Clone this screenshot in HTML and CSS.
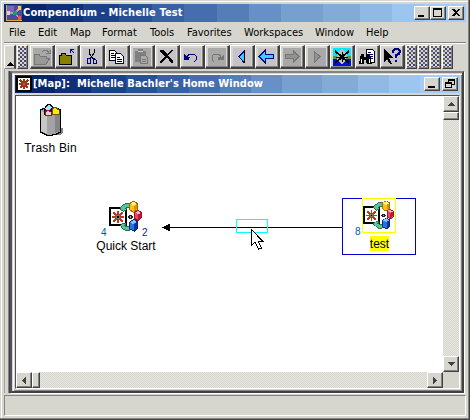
FILE: index.html
```html
<!DOCTYPE html>
<html lang="en"><head><meta charset="utf-8"><title>Compendium - Michelle Test</title><link rel="stylesheet" href="styles.css"></head>
<body>
<svg class="defs" width="0" height="0" shape-rendering="crispEdges">
<symbol id="map" viewBox="0 0 34 34">
<path d="M1 8h16v17H1z" fill="#fff" stroke="#000" stroke-width="2"/>
<path d="M8 11h2v12H8zM3 16h12v2H3zM4 12h2v1h1v1h1v1h2v-1h1v-1h1v-1h2v2h-1v1h-1v1h-1v2h1v1h1v1h1v2h-2v-1h-1v-1h-1v-1H8v1H7v1H6v1H4v-2h1v-1h1v-1h1v-2H6v-1H5v-1H4z" fill="#b53c18"/><path d="M7 15h4v4H7z" fill="#777"/><path d="M8 16h2v2H8z" fill="#000"/>
<path d="M11.500 7.500l2-2 3-2h4v4h-3l-1 1h1v1l-3 2-3-2zM11.500 25.500l2-2h3v1l-1 1 2 1h3v4h-4l-3-2z" fill="#5ac59c" stroke="#18754a"/>
<path d="M20 15h3v1h1v2h-1v1h-3v-1h-1v-2h1z" fill="#222"/><path d="M21 16h1v2h-1z" fill="#aaa"/>
<path d="M20.500 3.500l4-2 4 2v6l-4 3-4-3z" fill="#f7c318" stroke="#a56500"/><path d="M21 3l4-1 3 2-4 2z" fill="#fff384"/><path d="M25 6l3-2v5l-3 2z" fill="#d69210"/>
<path d="M25.500 12.500l3-2 4 2v5l-3 3-4-2z" fill="#ef4563" stroke="#a51028"/><path d="M26 12l3-1 3 2-3 1z" fill="#ffb5bd"/><path d="M29 14l3-1v4l-3 3z" fill="#bd1839"/>
<path d="M20.500 22.500l4-3 4 2v7l-3 3-5-3z" fill="#2971de" stroke="#08246b"/><path d="M21 22l4-2 3 2-4 2z" fill="#84c3ff"/><path d="M25 24l3-2v6l-3 3z" fill="#0834a5"/>
</symbol>
</svg>
<div class="app">
<div class="title"><svg class="logo" width="16" height="16"><path d="M0 0h16v16H0z" fill="#5148a4"/><path d="M1 1h7v6H1z" fill="#7967bc"/><path d="M2 8h7L14 3M9 8l4 5" stroke="#c78fc0" stroke-width="1.500" fill="none"/><circle cx="9" cy="8" r="2.200" fill="#18a55a"/><path d="M1 6h3v4H1z" fill="#d8c8f0"/><circle cx="13.500" cy="3" r="2" fill="#f7cf39"/><circle cx="13.500" cy="13" r="2" fill="#e7593c"/><path d="M0 15.500h16M.500 0v16" stroke="#d9a536"/></svg><b class="t1">Compendium - Michelle Test</b>
<span class="ctl first"><svg width="14" height="12"><path d="M3 8h6v2H3z"/></svg></span><span class="ctl"><svg width="14" height="12"><path d="M2 1h9v9H2zM3 3v6h7V3z" fill-rule="evenodd"/></svg></span><span class="ctl close"><svg width="14" height="12"><path d="M3 2h2l2 2 2-2h2L8 5.500l3 3.500H9L7 7 5 9H3l3-3.500z"/></svg></span></div>
<div class="menu"><span class="m1">File</span><span class="m2">Edit</span><span class="m3">Map</span><span class="m4">Format</span><span class="m5">Tools</span><span class="m6">Favorites</span><span class="m7">Workspaces</span><span class="m8">Window</span><span class="m9">Help</span></div>
<div class="tools">
<div class="fold"><svg width="9" height="5"><path d="M0 4h7V3H6V2H5V1H4V0H3v1H2v1H1v1H0z"/></svg></div><div class="grip lead"></div>
<div class="btn off"><svg width="18" height="18"><path d="M1 6h5l1 2h6v2h4l-4 6H1z" fill="#999" stroke="#777"/><path d="M9 4l2-2h3l2 3M13 5h4V2" stroke="#777" fill="none"/></svg></div>
<div class="btn"><svg width="18" height="18"><path d="M1 7h2V5h4l1 2h5v9H1z" fill="#848200" stroke="#000"/><path d="M12 1h4M12 1v4M12 1l4 4" stroke="#000094" fill="none"/></svg></div>
<div class="btn"><svg width="18" height="18"><path d="M6 1v4l4 6M11 1v4l-4 6" stroke="#000" fill="none"/><path d="M7 10l-3 1v4h3zM10 10l3 2v3h-3z" fill="none" stroke="#000084"/></svg></div>
<div class="btn"><svg width="18" height="18"><path d="M1.500 2.500h5l3 3v7h-8z" fill="#fff" stroke="#000"/><path d="M7.500 5.500h5l3 3v7h-8z" fill="#fff" stroke="#000084"/><path d="M3 5.500h3M3 7.500h4M3 9.500h4M9 9.500h3M9 11.500h5M9 13.500h5" stroke="#000"/></svg></div>
<div class="btn off"><svg width="18" height="18"><path d="M2 3h3V1h5v2h3v11H2z" fill="#808080"/><path d="M5 3h5" stroke="#ccc"/><path d="M7.500 7.500h5l2 2v6h-7z" fill="#aaa" stroke="#777"/><path d="M9 11h4M9 13h4" stroke="#777"/></svg></div>
<div class="btn"><svg width="18" height="18"><path d="M2 2h3l4 4 4-4h2l-5 5 5 6v2h-2L9 9l-5 6H2v-2l5-5-5-4z"/></svg></div>
<div class="btn"><svg width="18" height="18"><path d="M1 6l3 3h3l-1 3H1z" fill="#000084"/><path d="M4 9l2-3h5l2 2v4l-2 2" fill="none" stroke="#000084"/></svg></div>
<div class="btn off"><svg width="18" height="18"><path d="M16 6l-3 3h-3v3h6z" fill="#777"/><path d="M13 9l-2-3H6L4 8v4l2 2" fill="none" stroke="#777"/></svg></div>
<div class="btn"><svg width="18" height="18"><path d="M11.500 3v11h-1L6 8.500z" fill="#38cfff" stroke="#000084"/><path d="M11.500 3v12" stroke="#000"/></svg></div>
<div class="btn"><svg width="18" height="18"><path d="M1 8.500l6-6v4h8v4H7v4z" fill="#38cfff" stroke="#000084"/></svg></div>
<div class="btn off"><svg width="18" height="18"><path d="M16 8.500l-6-6v4H2v4h8v4z" fill="#929292" stroke="#777"/></svg></div>
<div class="btn off"><svg width="18" height="18"><path d="M6 3v11h1l5-5.500z" fill="#929292" stroke="#777"/></svg></div>
<div class="btn"><svg width="18" height="18"><path d="M0 0h18v18H0z" fill="#00e8ff"/><path d="M0 11h18v7H0z" fill="#0010df"/><path d="M0 8h18v3H0z" fill="#4b9b48"/><path d="M5 4l4-3 5 4-1 8-4 3-5-4z" fill="#bdbdbd"/><path d="M2 3l14 12M16 3L2 15" stroke="#000" stroke-width="2"/><path d="M3 9h12M9 4v10" stroke="#000"/></svg></div>
<div class="btn"><svg width="18" height="18"><path d="M8.500 1.500h6l2 2v11h-8z" fill="#fff" stroke="#000"/><path d="M10 4.500h3M10 6.500h5M10 8.500h5M10 10.500h5" stroke="#000084"/><path d="M3 6h3v3h3V6h3l2 10H9v-4H6v4H1z"/><path d="M3 11h1v4H3zM11 11h1v4h-1z" fill="#fff"/></svg></div>
<div class="btn"><svg width="18" height="18"><path d="M1 1v13l3-3 3 5h2l-3-6h4z"/><path d="M10 5V3l2-2h3l2 2-1 3-3 1v3" fill="none" stroke="#000084" stroke-width="2"/><path d="M12 12h2v2h-2z" fill="#000084"/></svg></div>
<div class="grip after"></div><div class="grip"></div><div class="grip"></div><div class="grip"></div>
</div>
<div class="desk"><div class="inner">
<div class="title child"><svg class="logo" width="16" height="16"><path d="M1 1h14v14H1z" fill="#fff" stroke="#000" stroke-width="2"/><path d="M8 3v10M3 8h10M4 4l8 8M12 4l-8 8" stroke="#a53010" stroke-width="1.500"/><path d="M7 7h2v2H7z" fill="#777"/></svg><b class="t2">[Map]:&nbsp; Michelle Bachler's Home Window</b>
<span class="ctl first"><svg width="14" height="12"><path d="M3 8h7v2H3z"/></svg></span><span class="ctl close"><svg width="14" height="12"><path d="M5 1h7v6H9v3H2V4h3zM6 3v1h3v2h2V3zM3 6v3h5V6z" fill-rule="evenodd"/></svg></span></div>
<div class="view">
<div class="canvas">
<svg class="wire" width="427" height="276" shape-rendering="crispEdges"><path d="M151 131.500h175" stroke="#000"/><path d="M146 131.500l8-4v8z"/><rect x="220.500" y="123.500" width="31" height="13" fill="none" stroke="#0ff"/><rect x="326.500" y="102.500" width="73" height="56" fill="none" stroke="#0000c6"/></svg>
<div class="node trash"><svg width="26" height="34" shape-rendering="crispEdges"><path d="M20 26h5v4l-3 3h-9z" fill="#848284"/><path d="M2.500 8l4-2h12l4 2v22l-4 2-4 1h-6l-6-3z" fill="#a5a2a5" stroke="#000"/><path d="M3 9l6 3v20l-6-3z" fill="#c6c6c6"/><path d="M17 12l5-2v19l-5 2z" fill="#858585"/><path d="M6 7l4-5h2l4 4-2 6H6z" fill="#00087b" stroke="#000"/><path d="M7 6l4-4 3 4-5 4z" fill="#b5dfff"/><path d="M14 7l3-2 4 3v4h-7z" fill="#ffeb00" stroke="#635900"/><path d="M7 10l3-2 3 2v3H7z" fill="#d8d8d8" stroke="#c00"/></svg><span>Trash Bin</span></div>
<div class="node quick"><svg width="34" height="34"><use href="#map"/></svg><span>Quick Start</span><i class="n4">4</i><i class="n2">2</i></div>
<div class="node test"><svg width="34" height="34"><use href="#map"/></svg><span>test</span><i class="n8">8</i></div>
<svg class="cursor" width="13" height="22" shape-rendering="crispEdges"><path d="M.500 .500v16l3.500-3.500 3.500 7 3-1-3.500-7h4.500z" fill="#fff" stroke="#000"/></svg>
</div>
<div class="vs"><span class="sb"><svg width="7" height="4"><path d="M3 0h1v1h1v1h1v1h1v1H0V3h1V2h1V1h1z"/></svg></span><span class="thumb"></span><span class="sb end"><svg width="7" height="4"><path d="M0 0h7v1H6v1H5v1H4v1H3V3H2V2H1V1H0z"/></svg></span></div>
<div class="hs"><span class="sb"><svg width="4" height="7"><path d="M4 0v7H3V6H2V5H1V4H0V3h1V2h1V1h1V0z"/></svg></span><span class="thumb"></span><span class="sb end"><svg width="4" height="7"><path d="M0 0h1v1h1v1h1v1h1v1H3v1H2v1H1v1H0z"/></svg></span></div><div class="corner"></div>
</div></div></div>
<div class="status"></div>
</div></body></html>
```
FILE: styles.css
```css
*{box-sizing:border-box}
body{margin:0;background:#d6d6ce;font-family:"DejaVu Sans Condensed","DejaVu Sans",sans-serif;font-stretch:condensed;font-size:11px;color:#000}
svg{display:block;shape-rendering:crispEdges;flex:none}
.defs{position:absolute}
.app{width:470px;height:420px;padding:4px 3px 3px 4px;display:flex;flex-direction:column;box-shadow:inset -1px -1px #424142,inset -2px -2px #848284,inset 1px 1px #d6d6ce,inset 2px 2px #fff;overflow:hidden}
.title{width:462px;height:18px;flex:none;display:flex;align-items:center;padding:0 2px;color:#fff;background:linear-gradient(90deg,#08246b 0 9%,#102f78 9% 17%,#1c408c 17% 25%,#295096 25% 32%,#395fa5 32% 39%,#466dae 39% 46%,#557eb9 46% 53%,#6690c7 53% 60%,#779fcf 60% 69%,#84abd7 69% 77%,#92b9e5 77% 84%,#9cc5ef 84% 91%,#a5cbf7 91%)}
.title b{font-size:11px;line-height:18px;white-space:pre;margin-left:1px;letter-spacing:.12px;flex:none}
.title .t2{letter-spacing:.06px}
.ctl{width:16px;height:14px;background:#d6d6ce;border:1px solid #fff;border-right-color:#424142;border-bottom-color:#424142;box-shadow:inset -1px -1px #848284;overflow:hidden}
.ctl.first{margin-left:auto}.ctl.close{margin-left:2px}
.menu{height:20px;flex:none;display:flex;padding-left:5px;line-height:21px;white-space:nowrap}
.menu span{flex:none}
.m1{width:29px}.m2,.m3{width:32px}.m4{width:48px}.m5{width:37px}.m6{width:57px}.m7{width:71px}.m8{width:51px}
.tools{height:27px;flex:none;display:flex;align-items:flex-start;padding-top:3px;box-shadow:inset 0 1px #848284,inset 0 2px #fff;width:462px}
.fold{width:12px;height:24px;border:1px solid #fff;border-right:2px solid #424142;border-bottom:1px solid #848284;padding:16px 0 0 2px}
.grip{width:11px;height:24px;margin-right:1px;border:1px solid #fff;border-right:1px solid #424142;border-bottom:1px solid #424142;background:conic-gradient(transparent 75%,#424173 0) 1px 1px/4px 4px,conic-gradient(transparent 75%,#63616b 0) 3px 3px/4px 4px,#d6d6ce;background:radial-gradient(circle,#424173 0 .8px,transparent .9px) 1px 1px/4px 4px,radial-gradient(circle,#63616b 0 .8px,transparent .9px) 3px 3px/4px 4px,#d6d6ce;box-shadow:inset -1px -1px #848284}
.grip.lead{margin:0 2px 0 1px;width:11px}.grip.after{margin-left:1px}
.btn{width:25px;height:24px;border:1px solid #fff;border-right:2px solid #424142;border-bottom:2px solid #424142;padding:2px;box-shadow:inset -1px -1px #848284}
.btn svg{background:#c6c3c6}.btn.off svg{background:#a9a9a7}
.desk{height:324px;width:462px;flex:none;padding:2px 2px 0 5px;border-left:1px solid #a5a5a0}
.inner{width:454px;height:322px;border:2px solid #424142;border-color:#848284 #424142 #424142 #52515a;padding:2px 3px 2px 2px;box-shadow:inset 1px 1px #d6d6ce,inset 2px 2px #fff,inset -1px -1px #848284,-1px 0 #424142,-2px 0 #848284,1px 1px #fff}
.child{width:445px;margin-left:1px;padding:0 2px 0 1px}
.view{margin:2px 0 0 1px;width:445px;height:294px;border:1px solid #52515a;border-right-color:#fff;border-bottom-color:#fff;display:grid;grid-template:276px 16px/427px 16px}
.canvas{background:#fff;position:relative;overflow:hidden;font:12px "Liberation Sans",Arial,sans-serif}
.wire{position:absolute;inset:0}
.node{position:absolute;display:flex;flex-direction:column;align-items:center;white-space:nowrap}
.node span{line-height:14px}.node i{position:absolute;font-style:normal;font-size:10px;line-height:10px;color:#005ab5}
.trash{left:8px;top:6px;width:53px}.trash span{margin-top:5px;letter-spacing:.2px}
.quick{left:79px;top:104px;width:62px}.quick span{margin-top:5px}
.n4{left:6px;top:28px}.quick .n2{left:47px;top:28px;color:#18187b}
.test{left:346px;top:102px;width:34px}.test svg{border:1px solid #ff0;width:34px;height:35px;overflow:visible}.test span{background:#ff0;margin:3px 0 0 1px;height:15px;line-height:16px}.n8{left:-7px;top:29px}
.cursor{position:absolute;left:235px;top:133px}
.vs,.hs{display:flex;background:conic-gradient(#e7e7e2 25%,#d6d6ce 0 50%,#e7e7e2 0 75%,#d6d6ce 0) 0 0/2px 2px}.vs{flex-direction:column}
.sb,.thumb{display:flex;align-items:center;justify-content:center;width:16px;height:16px;background:#d6d6ce;border:1px solid #fff;border-right:1px solid #424142;border-bottom:1px solid #424142;box-shadow:inset -1px -1px #848284;flex:none;fill:#424142}
.vs .thumb{height:8px}.hs .thumb{width:8px}.vs .end{margin-top:auto}.hs .end{margin-left:auto}
.corner{background:#d6d6ce}
.status{width:462px;height:21px;margin-top:2px;flex:none;border:1px solid #848284;border-right-color:#fff;border-bottom-color:#fff}
```
